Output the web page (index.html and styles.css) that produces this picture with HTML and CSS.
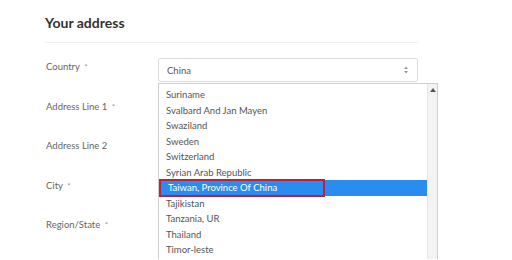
FILE: index.html
```html
<!DOCTYPE html>
<html>
    <head>
        <link rel="stylesheet" href="styles.css">
    </head>
    <body>
        <div class="address">
            <h2 class="title">Your address</h2>
            <div class="form">
                <div class="row">
                    <label class="label">Country <span class="req">*</span></label>
                    <div class="field">
                        <div class="select">
                            <span>China</span>
                            <svg class="arrows" width="6" height="10" viewBox="0 0 6 10">
                                <path d="M1 4 L3 1.5 L5 4 Z M1 6 L3 8.5 L5 6 Z" fill="#999"/>
                            </svg>
                        </div>
                        <div class="dropdown">
                            <ul class="options">
                                <li>Suriname</li>
                                <li>Svalbard And Jan Mayen</li>
                                <li>Swaziland</li>
                                <li>Sweden</li>
                                <li>Switzerland</li>
                                <li>Syrian Arab Republic</li>
                                <li class="selected"><span class="mark">Taiwan, Province Of China</span></li>
                                <li>Tajikistan</li>
                                <li>Tanzania, UR</li>
                                <li>Thailand</li>
                                <li>Timor-leste</li>
                            </ul>
                            <div class="scrollbar">
                                <svg width="6" height="4" viewBox="0 0 6 4">
                                    <path d="M0 4 L3 0 L6 4 Z" fill="#555"/>
                                </svg>
                            </div>
                        </div>
                    </div>
                </div>
                <div class="row">
                    <label class="label">Address Line 1 <span class="req">*</span></label>
                    <div class="field"><div class="input"></div></div>
                </div>
                <div class="row">
                    <label class="label">Address Line 2</label>
                    <div class="field"><div class="input"></div></div>
                </div>
                <div class="row">
                    <label class="label">City <span class="req">*</span></label>
                    <div class="field"><div class="input"></div></div>
                </div>
                <div class="row">
                    <label class="label">Region/State <span class="req">*</span></label>
                    <div class="field"><div class="input"></div></div>
                </div>
            </div>
        </div>
    </body>
</html>
```

FILE: styles.css
```css
*{
    padding: 0;
    margin: 0;
    box-sizing: border-box;
}
html,body{
    height: 260px;
    overflow: hidden;
}
body{
    background-color: #fff;
    font-family: Lato, "Open Sans", sans-serif;
    color: #555;
}
.address{
    width: 418px;
    padding: 14px 0 0 46px;
}
.title{
    font-size: 14px;
    font-weight: 700;
    color: #333;
    line-height: 18px;
    padding-bottom: 10px;
    border-bottom: 1px solid #f0f0f0;
    margin-left: -1px;
}
.form{
    padding-top: 15px;
}
.row{
    display: flex;
    height: 39.5px;
}
.label{
    width: 112px;
    font-size: 9.5px;
    line-height: 18px;
    color: #666;
}
.req{
    color: #999;
    font-size: 8px;
    margin-left: 2px;
}
.field{
    flex: 1;
    position: relative;
}
.select,.input{
    height: 24px;
    border: 1px solid #dcdcdc;
    border-radius: 2px;
}
.select{
    display: flex;
    align-items: center;
    justify-content: space-between;
    padding: 0 8px;
    font-size: 9.5px;
    color: #555;
}
.dropdown{
    position: absolute;
    left: 0;
    top: 25px;
    width: 280px;
    height: 176px;
    background-color: #fff;
    border: 1px solid #cfcfcf;
    border-bottom: none;
    display: flex;
    z-index: 2;
}
.options{
    list-style: none;
    flex: 1;
    padding-top: 3px;
}
.options li{
    height: 15.5px;
    line-height: 15.5px;
    padding-left: 7px;
    font-size: 9.5px;
    color: #555;
}
.options .selected{
    background-color: #2a8cf0;
    color: #fff;
    padding-left: 0;
}
.mark{
    display: inline-block;
    height: 18px;
    margin-top: -1px;
    line-height: 14px;
    padding-left: 7px;
    width: 166px;
    border: 2px solid #b82437;
}
.scrollbar{
    width: 10px;
    background-color: #f3f3f3;
    border-left: 1px solid #e6e6e6;
    display: flex;
    justify-content: center;
    padding-top: 4px;
}
```
